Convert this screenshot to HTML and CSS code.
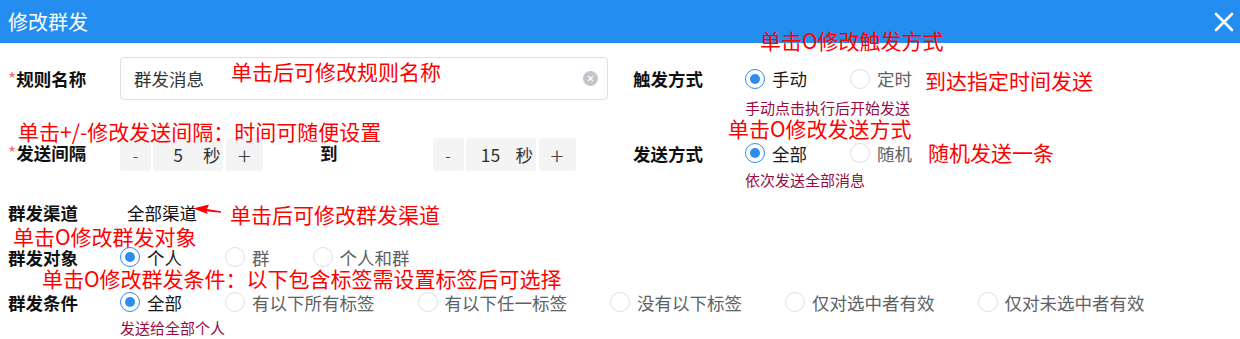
FILE: index.html
```html
<!DOCTYPE html>
<html lang="zh-CN">
<head>
    <meta charset="UTF-8">
    <meta name="viewport" content="width=device-width, initial-scale=1.0">
    <title>修改群发</title>
    <link rel="stylesheet" href="styles.css">
</head>
<body>
    <div class="topbar">
        <span class="title">修改群发</span>
        <svg class="close" width="20" height="20" viewBox="0 0 20 20">
            <path d="M2 2 L18 18 M18 2 L2 18" stroke="#fff" stroke-width="2.6" stroke-linecap="round"/>
        </svg>
    </div>

    <div class="form">
        <div class="grid">
            <!-- 规则名称 -->
            <div class="field f-name">
                <div class="label"><i>*</i>规则名称</div>
                <div class="input">
                    <span>群发消息</span>
                    <svg class="clear" width="15" height="15" viewBox="0 0 15 15">
                        <circle cx="7.5" cy="7.5" r="7.5" fill="#c0c4cc"/>
                        <path d="M5 5 L10 10 M10 5 L5 10" stroke="#fff" stroke-width="1.3"/>
                    </svg>
                </div>
            </div>

            <!-- 触发方式 -->
            <div class="field-col">
                <div class="field f-trigger">
                    <div class="label">触发方式</div>
                    <div class="radios">
                        <span class="opt on"><span class="dot"></span>手动</span>
                        <span class="opt"><span class="dot"></span>定时</span>
                    </div>
                </div>
                <div class="hint">手动点击执行后开始发送</div>
            </div>

            <!-- 发送间隔 -->
            <div class="field f-interval">
                <div class="label"><i>*</i>发送间隔</div>
                <div class="stepper">
                    <span class="step-btn minus">-</span>
                    <span class="step-val"><span class="num">5</span><span class="unit">秒</span></span>
                    <span class="step-btn plus">+</span>
                </div>
                <span class="to">到</span>
                <div class="stepper">
                    <span class="step-btn minus">-</span>
                    <span class="step-val"><span class="num">15</span><span class="unit">秒</span></span>
                    <span class="step-btn plus">+</span>
                </div>
            </div>

            <!-- 发送方式 -->
            <div class="field-col">
                <div class="field f-send">
                    <div class="label">发送方式</div>
                    <div class="radios">
                        <span class="opt on"><span class="dot"></span>全部</span>
                        <span class="opt"><span class="dot"></span>随机</span>
                    </div>
                </div>
                <div class="hint hint-send">依次发送全部消息</div>
            </div>
        </div>

        <div class="field f-channel">
            <div class="label">群发渠道</div>
            <span class="value">全部渠道</span>
        </div>

        <div class="field f-target">
            <div class="label">群发对象</div>
            <div class="radios">
                <span class="opt on"><span class="dot"></span>个人</span>
                <span class="opt"><span class="dot"></span>群</span>
                <span class="opt"><span class="dot"></span>个人和群</span>
            </div>
        </div>

        <div class="field f-cond">
            <div class="label">群发条件</div>
            <div class="radios">
                <span class="opt on"><span class="dot"></span>全部</span>
                <span class="opt"><span class="dot"></span>有以下所有标签</span>
                <span class="opt"><span class="dot"></span>有以下任一标签</span>
                <span class="opt"><span class="dot"></span>没有以下标签</span>
                <span class="opt"><span class="dot"></span>仅对选中者有效</span>
                <span class="opt"><span class="dot"></span>仅对未选中者有效</span>
            </div>
        </div>
        <div class="hint hint-cond">发送给全部个人</div>
    </div>

    <!-- red notes drawn over the form -->
    <div class="note n-name">单击后可修改规则名称</div>
    <div class="note n-trigger">单击O修改触发方式</div>
    <div class="note n-timed">到达指定时间发送</div>
    <div class="note n-interval">单击+/-修改发送间隔：时间可随便设置</div>
    <div class="note n-send">单击O修改发送方式</div>
    <div class="note n-random">随机发送一条</div>
    <div class="note n-channel">单击后可修改群发渠道</div>
    <div class="note n-target">单击O修改群发对象</div>
    <div class="note n-cond">单击O修改群发条件：以下包含标签需设置标签后可选择</div>
    <svg class="arrow" width="34" height="14" viewBox="0 0 34 14">
        <polygon points="3,6.5 19,2.5 17,7 31,9.3 31,10.8 16.5,9.3 18,12" fill="#f00"/>
    </svg>
</body>
</html>
```

FILE: styles.css
```css
* {
    margin: 0;
    padding: 0;
    box-sizing: border-box;
}

body {
    font-family: "Noto Sans CJK SC", "Noto Sans", sans-serif;
    font-size: 17.5px;
    color: #222;
    background: #fff;
    width: 1240px;
    height: 339px;
    overflow: hidden;
    position: relative;
}

.topbar {
    height: 43px;
    background: #248ef0;
    color: #fff;
    display: flex;
    align-items: center;
    justify-content: space-between;
    padding: 0 6px 0 8px;
}

.title {
    font-size: 20px;
    line-height: 1;
}

.form {
    padding: 14px 0 0 8px;
}

.grid {
    display: grid;
    grid-template-columns: 625px 1fr;
    row-gap: 22px;
}

.field {
    display: flex;
    align-items: center;
}

.label {
    width: 112px;
    flex: none;
    font-weight: 700;
    color: #111;
    line-height: 1.2;
}

.label i {
    font-style: normal;
    font-weight: 400;
    color: #f56c6c;
}

.f-name {
    height: 43px;
}

.input {
    width: 488px;
    height: 43px;
    border: 1px solid #dcdfe6;
    border-radius: 4px;
    display: flex;
    align-items: center;
    justify-content: space-between;
    padding: 0 9px 0 13px;
    color: #333;
}

.f-trigger {
    height: 43px;
}

.radios {
    display: flex;
    align-items: center;
}

.opt {
    display: flex;
    align-items: center;
    margin-right: 43px;
    color: #606266;
    line-height: 1.2;
}

.opt.on {
    color: #1a1a1a;
}

.dot {
    width: 20px;
    height: 20px;
    border: 1px solid #dcdee2;
    border-radius: 50%;
    margin-right: 7px;
    display: flex;
    align-items: center;
    justify-content: center;
}

.opt.on .dot {
    border-color: #2d8cf0;
}

.opt.on .dot::after {
    content: "";
    width: 10px;
    height: 10px;
    border-radius: 50%;
    background: #2d8cf0;
}

.hint {
    margin-left: 112px;
    font-size: 15px;
    line-height: 16px;
    color: #990b3f;
}

.f-interval {
    align-items: flex-start;
}

.f-interval .label {
    line-height: 30px;
}

.stepper {
    display: flex;
    height: 33px;
    color: #444;
}

.step-btn,
.step-val {
    background: #f4f4f5;
    border-radius: 3px;
    display: flex;
    align-items: center;
    justify-content: center;
}

.minus {
    width: 31px;
    margin-right: 2px;
    font-weight: 300;
}

.plus {
    width: 37px;
    margin-left: 3px;
    font-size: 24px;
    font-weight: 300;
    line-height: 1;
}

.step-val {
    width: 70px;
    justify-content: flex-start;
    color: #333;
}

.num {
    width: 50px;
    text-align: center;
}

.to {
    font-weight: 700;
    color: #111;
    line-height: 30px;
    margin: 0 95px 0 57px;
}

.f-send {
    height: 30px;
}

.hint-send {
    margin-top: 4px;
}

.f-channel {
    margin-top: 12px;
    height: 24px;
}

.value {
    margin-left: 7px;
    color: #111;
}

.f-target,
.f-cond {
    margin-top: 21px;
    height: 24px;
}

.hint-cond {
    margin-top: 6px;
}

.note {
    position: absolute;
    font-size: 21px;
    line-height: 21px;
    color: #f00;
    white-space: nowrap;
}

.n-name { left: 231px; top: 61px; }
.n-trigger { left: 760px; top: 30px; }
.n-timed { left: 925px; top: 70px; }
.n-interval { left: 18px; top: 121px; }
.n-send { left: 728px; top: 118px; }
.n-random { left: 928px; top: 142px; }
.n-channel { left: 230px; top: 204px; }
.n-target { left: 13px; top: 226px; }
.n-cond { left: 42px; top: 268px; }

.arrow {
    position: absolute;
    left: 190px;
    top: 202px;
}
```
